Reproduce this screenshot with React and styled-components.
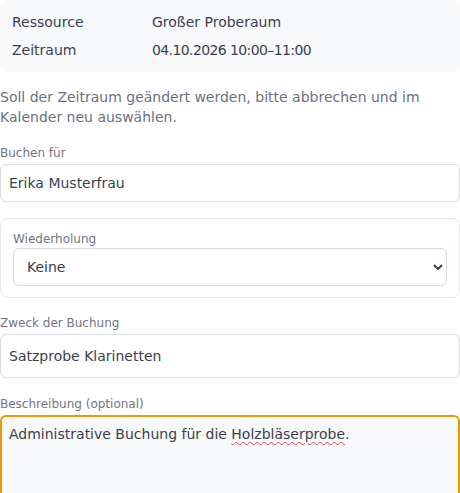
import React from 'react'
import styled, { createGlobalStyle } from 'styled-components'

const GlobalStyle = createGlobalStyle`
  body {
    margin: 0;
    background: #ffffff;
    font-family: "DejaVu Sans", "Noto Sans", sans-serif;
    color: #3b3f4c;
  }
`

const Page = styled.div`
  width: 460px;
  display: flex;
  flex-direction: column;
`

const InfoBox = styled.div`
  display: grid;
  grid-template-columns: 140px 1fr;
  row-gap: 6px;
  padding: 11px 12px;
  background: #f8f9fb;
  border-radius: 8px;
  font-size: 14px;
  line-height: 22px;
  color: #3b3f4c;
`

const Numbers = styled.span`
  letter-spacing: -0.6px;
`

const Hint = styled.p`
  margin: 15px 0 17px;
  font-size: 14px;
  line-height: 20px;
  color: #6c7080;
`

const Label = styled.label`
  display: block;
  margin-bottom: ${({ $tight }) => ($tight ? 0 : 2)}px;
  font-size: 12px;
  line-height: 18px;
  color: #717584;
`

const Field = styled.div`
  margin-bottom: ${({ $gap }) => $gap || 0}px;
`

const Input = styled.input`
  box-sizing: border-box;
  display: block;
  width: 100%;
  height: ${({ $h }) => $h || 38}px;
  padding: 0 8px;
  border: 1px solid #d9dbe3;
  border-radius: 6px;
  background: #ffffff;
  font: inherit;
  font-size: 14px;
  color: #3b3f4c;
  outline: none;
`

const Fieldset = styled.div`
  margin-bottom: 16px;
  padding: 11px 12px 11px 12px;
  border: 1px solid #e6e7ec;
  border-radius: 8px;
`

const Select = styled.select`
  box-sizing: border-box;
  display: block;
  width: 100%;
  height: 38px;
  padding: 0 9px;
  border: 1px solid #d9dbe3;
  border-radius: 6px;
  background: #ffffff;
  font: inherit;
  font-size: 14px;
  color: #3b3f4c;
`

const TextBox = styled.div`
  box-sizing: border-box;
  width: 100%;
  height: 90px;
  padding: 7px 7px;
  border: 2px solid #e69a0a;
  border-radius: 6px;
  background: #f8f9fb;
  font-size: 14px;
  line-height: 20px;
  color: #3b3f4c;
  resize: vertical;
  overflow: auto;
`

const Misspelled = styled.span`
  text-decoration: underline wavy #e5484d;
  text-decoration-thickness: 1px;
  text-underline-offset: 2px;
`

export default function App() {
  return (
    <Page>
      <GlobalStyle />
      <InfoBox>
        <span>Ressource</span>
        <span>Großer Proberaum</span>
        <span>Zeitraum</span>
        <Numbers>04.10.2026 10:00–11:00</Numbers>
      </InfoBox>

      <Hint>Soll der Zeitraum geändert werden, bitte abbrechen und im Kalender neu auswählen.</Hint>

      <Field $gap={16}>
        <Label>Buchen für</Label>
        <Input defaultValue="Erika Musterfrau" />
      </Field>

      <Fieldset>
        <Label $tight>Wiederholung</Label>
        <Select defaultValue="none">
          <option value="none">Keine</option>
          <option value="weekly">Wöchentlich</option>
        </Select>
      </Fieldset>

      <Field $gap={17}>
        <Label>Zweck der Buchung</Label>
        <Input $h={44} defaultValue="Satzprobe Klarinetten" />
      </Field>

      <Field>
        <Label>Beschreibung (optional)</Label>
        <TextBox>
          Administrative Buchung für die <Misspelled>Holzbläserprobe</Misspelled>.
        </TextBox>
      </Field>
    </Page>
  )
}
